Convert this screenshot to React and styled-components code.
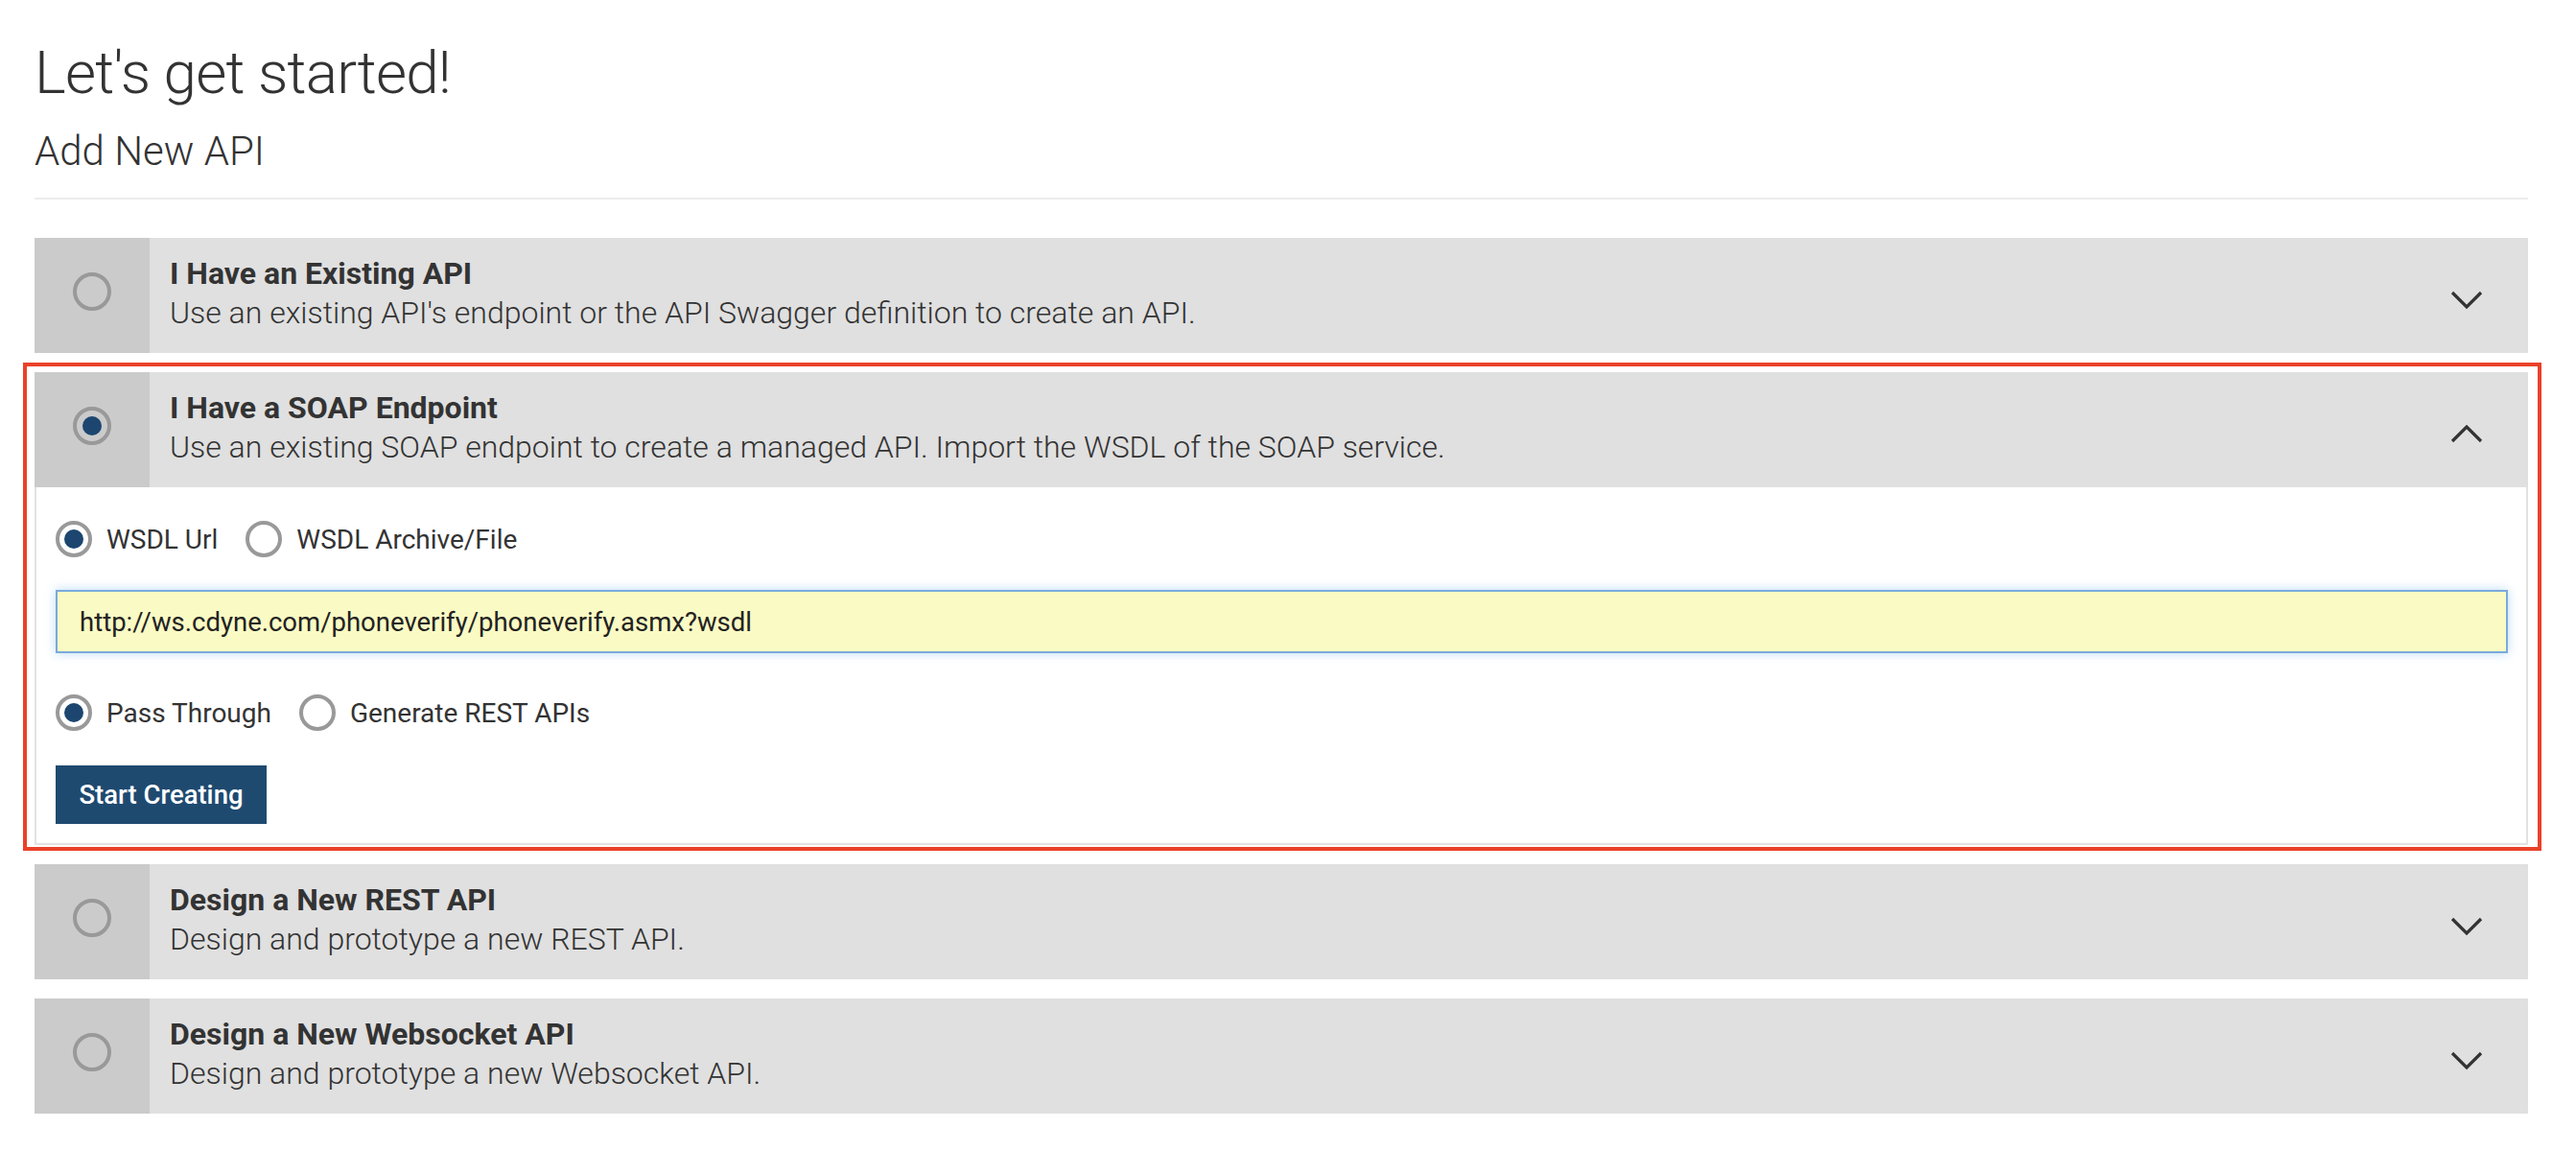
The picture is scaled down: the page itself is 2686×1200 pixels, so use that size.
import React from "react";
import styled, { createGlobalStyle } from "styled-components";

const GlobalStyle = createGlobalStyle`
  body {
    margin: 0;
    background: #fff;
    font-family: Roboto, "Liberation Sans", sans-serif;
    color: #333;
  }
  * {
    box-sizing: border-box;
  }
`;

const options = [
  {
    id: "existing",
    title: "I Have an Existing API",
    desc: "Use an existing API's endpoint or the API Swagger definition to create an API.",
  },
  {
    id: "soap",
    title: "I Have a SOAP Endpoint",
    desc: "Use an existing SOAP endpoint to create a managed API. Import the WSDL of the SOAP service.",
    open: true,
  },
  {
    id: "rest",
    title: "Design a New REST API",
    desc: "Design and prototype a new REST API.",
  },
  {
    id: "ws",
    title: "Design a New Websocket API",
    desc: "Design and prototype a new Websocket API.",
  },
];

const Chevron = ({ up }) => (
  <svg width="34" height="19" viewBox="0 0 34 19">
    <polyline
      points={up ? "2,17 17,2 32,17" : "2,2 17,17 32,2"}
      fill="none"
      stroke="#333"
      strokeWidth="3.2"
    />
  </svg>
);

const SoapForm = () => (
  <Body>
    <RadioRow>
      <Option>
        <Radio checked size={38} />
        WSDL Url
      </Option>
      <Option>
        <Radio size={38} />
        WSDL Archive/File
      </Option>
    </RadioRow>
    <UrlInput defaultValue="http://ws.cdyne.com/phoneverify/phoneverify.asmx?wsdl" />
    <RadioRow>
      <Option>
        <Radio checked size={38} />
        Pass Through
      </Option>
      <Option>
        <Radio size={38} />
        Generate REST APIs
      </Option>
    </RadioRow>
    <StartButton>Start Creating</StartButton>
  </Body>
);

const App = () => (
  <Page>
    <GlobalStyle />
    <Heading>Let's get started!</Heading>
    <SubHeading>Add New API</SubHeading>
    <Divider />

    <CardList>
      {options.map(({ id, title, desc, open }) => (
        <Card key={id}>
          <CardHeader>
            <RadioCell>
              <Radio checked={open} size={40} />
            </RadioCell>
            <HeaderText>
              <CardTitle>{title}</CardTitle>
              <CardDesc>{desc}</CardDesc>
            </HeaderText>
            <ChevronCell>
              <Chevron up={open} />
            </ChevronCell>
          </CardHeader>
          {open && <SoapForm />}
          {open && <Highlight />}
        </Card>
      ))}
    </CardList>
  </Page>
);

const Page = styled.div`
  padding: 41px 50px 40px 36px;
`;

const Heading = styled.h1`
  margin: 0;
  font-size: 62px;
  line-height: 70px;
  font-weight: 300;
  letter-spacing: -0.8px;
  color: #333;
`;

const SubHeading = styled.h2`
  margin: 23px 0 0;
  font-size: 42px;
  line-height: 48px;
  font-weight: 300;
  color: #333;
`;

const Divider = styled.hr`
  margin: 24px 0 0;
  border: none;
  height: 2px;
  background: #ececec;
`;

const CardList = styled.div`
  margin-top: 40px;
  display: flex;
  flex-direction: column;
  gap: 20px;
`;

const Card = styled.div`
  position: relative;
`;

const CardHeader = styled.div`
  display: flex;
  height: 120px;
  background: #e0e0e0;
`;

const RadioCell = styled.div`
  width: 120px;
  flex-shrink: 0;
  background: #cbcbcb;
  display: flex;
  justify-content: center;
  padding-top: 36px;
`;

const Radio = styled.span`
  width: ${({ size }) => size}px;
  height: ${({ size }) => size}px;
  border-radius: 50%;
  border: 4px solid #999;
  flex-shrink: 0;
  display: flex;
  align-items: center;
  justify-content: center;

  &::after {
    content: "";
    width: 20px;
    height: 20px;
    border-radius: 50%;
    background: ${({ checked }) => (checked ? "#1c4670" : "transparent")};
  }
`;

const HeaderText = styled.div`
  flex: 1;
  padding: 16px 0 0 21px;
`;

const CardTitle = styled.div`
  font-size: 32px;
  line-height: 42px;
  font-weight: 700;
  color: #333;
`;

const CardDesc = styled.div`
  font-size: 32px;
  line-height: 40px;
  font-weight: 300;
  color: #333;
`;

const ChevronCell = styled.div`
  width: 128px;
  flex-shrink: 0;
  display: flex;
  align-items: center;
  justify-content: center;
  padding-top: 8px;
`;

const Body = styled.div`
  border: 2px solid #e2e2e2;
  border-top: none;
  padding: 34px 19px 20px 20px;
`;

const RadioRow = styled.div`
  display: flex;
  align-items: center;
  gap: 29px;
  height: 40px;
`;

const Option = styled.label`
  display: flex;
  align-items: center;
  gap: 15px;
  font-size: 28px;
  color: #333;
`;

const UrlInput = styled.input`
  display: block;
  width: 100%;
  height: 66px;
  margin: 33px 0 42px;
  padding: 0 0 0 23px;
  border: 2px solid #7aaadc;
  background: #fafac4;
  box-shadow: 0 0 10px rgba(102, 175, 233, 0.45);
  font-family: Roboto, "Liberation Sans", sans-serif;
  font-size: 27.5px;
  color: #222;
  outline: none;
`;

const StartButton = styled.button`
  display: flex;
  align-items: center;
  justify-content: center;
  margin-top: 35px;
  width: 220px;
  height: 61px;
  padding: 0;
  border: none;
  background: #1f4a70;
  color: #fff;
  font-family: Roboto, "Liberation Sans", sans-serif;
  font-size: 27.5px;
  font-weight: 500;
`;

const Highlight = styled.div`
  position: absolute;
  top: -10px;
  left: -12px;
  right: -14px;
  bottom: -6px;
  border: 4px solid #ea4129;
  pointer-events: none;
`;

export default App;
